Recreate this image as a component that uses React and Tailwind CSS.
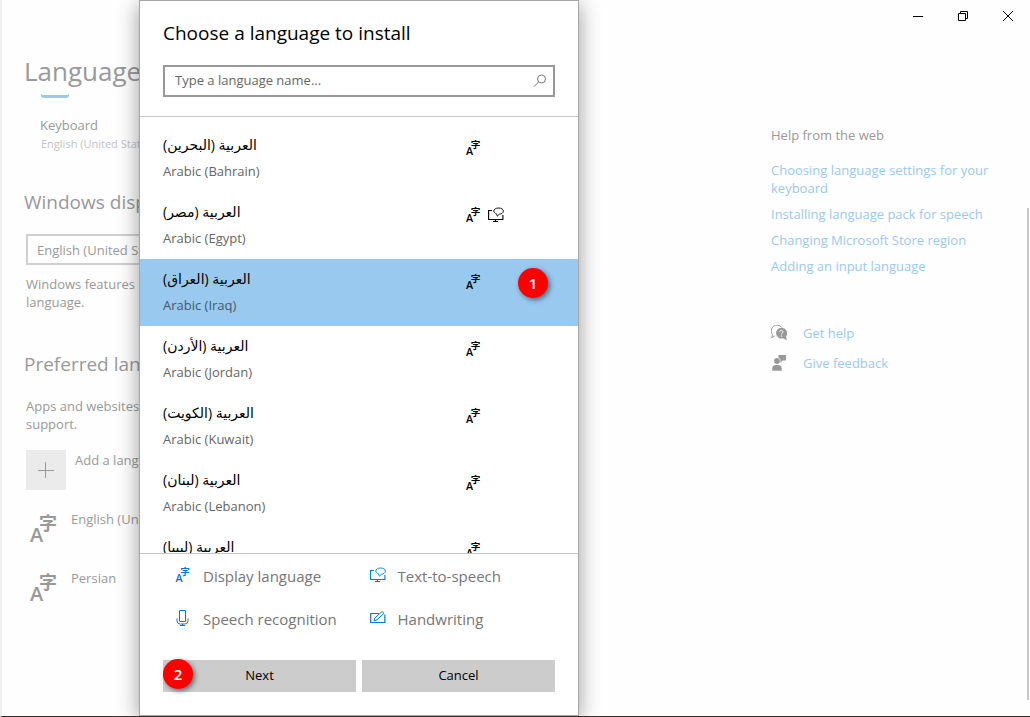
import React from "react";

function LanguageIcon({ className }) {
  return (
    <svg viewBox="0 0 28 28" className={`overflow-visible ${className}`} fill="currentColor" aria-hidden="true">
      <text x="0" y="27.500" fontSize="20" fontWeight="600" fontFamily='"Open Sans", sans-serif'>A</text>
      <text x="9" y="15.500" fontSize="18" fontWeight="700" fontFamily='"Noto Sans CJK SC", sans-serif'>字</text>
    </svg>
  );
}

function SpeechIcon({ className }) {
  return (
    <svg viewBox="0 0 16 16" className={className} fill="none" stroke="currentColor" aria-hidden="true">
      <path d="M4 3.500H.6v9h14.300V8" strokeWidth="1.100" />
      <path d="M7.500 12.500v2M5 14.500h5" strokeWidth="1.200" />
      <path d="M8.600 6.900C7 6.400 5.800 5.400 5.800 4.100 5.800 2.200 7.900 1 10.600 1s4.800 1.200 4.800 3.100-2 3-4 3.100L9.300 9.200 8.600 6.900z" strokeWidth=".9" />
    </svg>
  );
}

function MicIcon({ className }) {
  return (
    <svg viewBox="0 0 16 18" className={className} fill="none" stroke="currentColor" aria-hidden="true">
      <rect x="4.500" y="1.500" width="6" height="11" rx="0.500" strokeWidth="1" />
      <path d="M2 9.500v2c0 2.300 1.500 3.500 3.500 3.500h4c2 0 3.500-1.200 3.500-3.500v-2M7.500 15v1.500M5 16.500h5" strokeWidth="1" />
    </svg>
  );
}

function PenIcon({ className }) {
  return (
    <svg viewBox="0 0 16 16" className={className} fill="none" stroke="currentColor" aria-hidden="true">
      <path d="M9 3.500H.7v9h14.200V4.500" strokeWidth="1.200" />
      <path d="M4 10.800l.8-2.700 7.300-6.600 1.900 1.900-7.100 6.400L4 10.800z" strokeWidth="1" />
    </svg>
  );
}

function HelpIcon() {
  return (
    <svg viewBox="0 0 16 16" className="h-4 w-4 shrink-0 text-[#999]" fill="none" stroke="currentColor" aria-hidden="true">
      <path d="M3.700 10.800.8 12.800l.6-3.400A5.200 5.200 0 1 1 10.600 2.400" strokeWidth="1" />
      <path d="M10.300 2.800a5.400 5.400 0 1 0 2.200 10.400L15.800 15.600l-.7-4.300a5.400 5.400 0 0 0-4.800-8.500z" fill="currentColor" stroke="none" />
      <path d="M8.800 6.900c0-2.200 3.200-2 3.200 0 0 1.200-1.600 1.200-1.600 2.500M10.400 10.500v1.200" stroke="#fff" strokeWidth="1" />
    </svg>
  );
}

function FeedbackIcon() {
  return (
    <svg viewBox="0 0 16 16" className="h-4 w-4 shrink-0 text-[#999]" fill="currentColor" aria-hidden="true">
      <circle cx="6" cy="6" r="2.900" />
      <path d="M1.200 15.800v-2.300c0-2.200 1.700-3.500 3.600-3.500h2.400c1.900 0 3.600 1.300 3.600 3.500v2.300zM7.500 0H15v5.500h-3.300L9.400 7.700V4.400L7.500 2.500z" />
    </svg>
  );
}

const languages = [
  { native: "العربية (البحرين)", name: "Arabic (Bahrain)" },
  { native: "العربية (مصر)", name: "Arabic (Egypt)", speech: true },
  { native: "العربية (العراق)", name: "Arabic (Iraq)", selected: true, step: "1" },
  { native: "العربية (الأردن)", name: "Arabic (Jordan)" },
  { native: "العربية (الكويت)", name: "Arabic (Kuwait)" },
  { native: "العربية (لبنان)", name: "Arabic (Lebanon)" },
  { native: "العربية (ليبيا)", name: "Arabic (Libya)" },
];

const features = [
  { label: "Display language", icon: <LanguageIcon className="h-[15px] w-4" /> },
  { label: "Text-to-speech", icon: <SpeechIcon className="h-4 w-4" /> },
  { label: "Speech recognition", icon: <MicIcon className="h-[18px] w-4" /> },
  { label: "Handwriting", icon: <PenIcon className="h-4 w-4" /> },
];

const webLinks = [
  "Choosing language settings for your keyboard",
  "Installing language pack for speech",
  "Changing Microsoft Store region",
  "Adding an input language",
];

function StepBadge({ children, className }) {
  return (
    <span
      className={`absolute flex h-[30px] w-[30px] items-center justify-center rounded-full bg-[#fe0000] text-[15px] font-semibold text-white shadow-[2px_2px_5px_rgba(0,0,0,0.5)] ${className}`}
    >
      {children}
    </span>
  );
}

function WindowControls() {
  return (
    <header className="flex h-8 justify-end text-black">
      <button aria-label="Minimize" className="flex w-[45px] items-center justify-center">
        <svg viewBox="0 0 12 12" className="h-3 w-3" fill="none" stroke="currentColor" aria-hidden="true">
          <path d="M1 6.500h10" />
        </svg>
      </button>
      <button aria-label="Restore" className="flex w-[45px] items-center justify-center">
        <svg viewBox="0 0 12 12" className="h-3 w-3" fill="none" stroke="currentColor" aria-hidden="true">
          <path d="M1.500 3.500h7v7h-7zM3.500 3.500v-2h7v7h-2" />
        </svg>
      </button>
      <button aria-label="Close" className="flex w-[45px] items-center justify-center">
        <svg viewBox="0 0 12 12" className="h-3 w-3" fill="none" stroke="currentColor" aria-hidden="true">
          <path d="M1 1l10 10M11 1L1 11" />
        </svg>
      </button>
    </header>
  );
}

function InstalledLanguage({ name }) {
  return (
    <li className="flex h-[59px] gap-[13px]">
      <LanguageIcon className="mt-1 ml-1 h-7 w-7 shrink-0" />
      <span>{name}</span>
    </li>
  );
}

function SettingsPage() {
  return (
    <div className="flex justify-between">
      <main className="w-[470px] pt-5 pl-[22px] text-[13px] leading-[18px] text-[#999]">
        <h1 className="text-[26px] leading-[38px]">Language</h1>
        <div className="mt-1 ml-[17px] h-1 w-7 rounded-b-[3px] border-x border-b-[3px] border-[#99c9ef]" />
        <p className="mt-[18px] ml-4">Keyboard</p>
        <p className="mt-px ml-[17px] text-[11px] text-[#c2c2c2]">English (United States)</p>

        <h2 className="mt-[35px] text-[19px] leading-7">Windows display language</h2>
        <select
          aria-label="Windows display language"
          className="mt-[18px] ml-0.5 h-[31px] w-full appearance-none border-2 border-[#d0d0d0] bg-white px-[9px]"
        >
          <option>English (United States)</option>
        </select>
        <p className="mt-[10px] ml-0.5">
          Windows features like Settings and File Explorer will appear in this language.
        </p>

        <h2 className="mt-[39px] text-[19px] leading-7">Preferred languages</h2>
        <p className="mt-[19px] ml-0.5">
          Apps and websites will appear in the first language in the list that they support.
        </p>
        <button className="mt-[17px] ml-0.5 flex gap-[9px] text-left">
          <span className="flex h-10 w-10 items-center justify-center bg-[#ebebeb]">
            <svg viewBox="0 0 16 16" className="h-4 w-4" fill="none" stroke="currentColor" aria-hidden="true">
              <path d="M7.500 0v16M0 8.500h16" />
            </svg>
          </span>
          <span className="pt-px">Add a language</span>
        </button>
        <ul className="mt-[20px] ml-0.5">
          <InstalledLanguage name="English (United States)" />
          <InstalledLanguage name="Persian" />
        </ul>
      </main>

      <aside className="mr-[19px] w-[240px] pt-[94px] text-[13px] leading-[18px] text-[#99c9ef]">
        <h2 className="text-[#999]">Help from the web</h2>
        <ul className="mt-[17px] flex flex-col gap-2">
          {webLinks.map((text) => (
            <li key={text}>
              <a href="#" className="block">{text}</a>
            </li>
          ))}
        </ul>
        <a href="#" className="mt-[49px] flex items-center gap-4">
          <HelpIcon />
          Get help
        </a>
        <a href="#" className="mt-3 flex items-center gap-4">
          <FeedbackIcon />
          Give feedback
        </a>
      </aside>
    </div>
  );
}

function LanguageRow({ item }) {
  return (
    <li>
      <button
        className={`relative flex w-full items-start pt-[7px] pb-1.5 pl-[23px] text-left text-[13px] ${
          item.selected ? "bg-[#99c9ef]" : ""
        }`}
      >
        <span className="flex w-[303px] flex-col items-start">
          <span dir="rtl" lang="ar" className="text-[14px] leading-[25px] text-black">{item.native}</span>
          <span className={`leading-[29px] ${item.selected ? "text-[#43596a]" : "text-[#666]"}`}>{item.name}</span>
        </span>
        <span className="flex gap-[7px] pt-2 text-black">
          <LanguageIcon className="h-[15px] w-[15px]" />
          {item.speech && <SpeechIcon className="h-4 w-4" />}
        </span>
        {item.step && <StepBadge className="top-[9px] right-[30px]">{item.step}</StepBadge>}
      </button>
    </li>
  );
}

function InstallDialog() {
  return (
    <section
      role="dialog"
      aria-labelledby="dialog-title"
      className="absolute top-0 bottom-0 left-[137px] flex w-[440px] flex-col border border-[#a6a6a6] bg-white shadow-[0_4px_20px_rgba(0,0,0,0.4)]"
    >
      <div className="border-b border-[#c4c4c4] px-[23px] pt-[18px] pb-[19px]">
        <h2 id="dialog-title" className="text-[19px] leading-7 text-black">Choose a language to install</h2>
        <div className="mt-[18px] flex h-8 items-center border-2 border-[#999] px-2.5">
          <input
            aria-label="Type a language name"
            placeholder="Type a language name..."
            className="min-w-0 flex-1 text-[13px] outline-none placeholder:text-[#666]"
          />
          <button aria-label="Search" className="-mr-1 text-[#777]">
            <svg viewBox="0 0 14 14" className="h-3.5 w-3.5" fill="none" stroke="currentColor" aria-hidden="true">
              <circle cx="8.500" cy="5" r="4" />
              <path d="M5.700 7.800.8 12.800" />
            </svg>
          </button>
        </div>
      </div>

      <ul className="min-h-0 flex-1 overflow-y-auto pt-2 [scrollbar-width:none]">
        {languages.map((item) => (
          <LanguageRow key={item.name} item={item} />
        ))}
      </ul>

      <div className="border-t border-[#c4c4c4] px-[23px] pb-[23px]">
        <ul className="grid grid-cols-2 gap-x-[9px] pt-px pl-3 text-[15px] leading-[43px] text-[#767676]">
          {features.map(({ label, icon }) => (
            <li key={label} className="flex items-center gap-3 whitespace-nowrap">
              <span className="pb-1 text-[#0078d7]">{icon}</span>
              {label}
            </li>
          ))}
        </ul>
        <div className="mt-[19px] grid grid-cols-2 gap-1.5 text-[13px] text-black">
          <button className="relative h-8 bg-[#ccc]">
            <StepBadge className="-top-px left-0">2</StepBadge>
            Next
          </button>
          <button className="h-8 bg-[#ccc]">Cancel</button>
        </div>
      </div>
    </section>
  );
}

export default function App() {
  return (
    <div className="relative h-screen min-h-[640px] overflow-hidden border-b border-l-2 border-b-[#3a2c28] border-l-[#f0f0f0] bg-[#fefefe] font-['Open_Sans','Noto_Sans','DejaVu_Sans',sans-serif]">
      <WindowControls />
      <SettingsPage />
      <div className="absolute top-[208px] right-px bottom-4 w-0.5 bg-[#c8c8c8]" />
      <InstallDialog />
    </div>
  );
}
